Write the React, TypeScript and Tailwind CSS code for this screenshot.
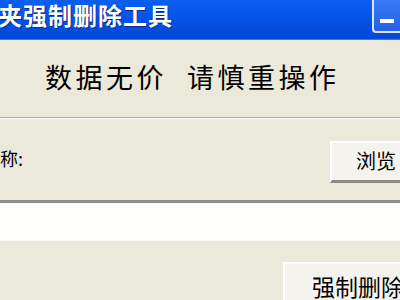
const cjk = "font-['SimSun','Noto_Sans_CJK_SC',sans-serif]";

export default function App() {
	return (
		<div
			className={`w-[400px] h-[300px] overflow-hidden bg-[#ebe9d9] flex flex-col text-black ${cjk}`}
		>
			{/* title bar */}
			<div className="h-[40px] shrink-0 flex justify-between bg-gradient-to-b from-[#0a5ef0] via-[#0552e6] to-[#0447d6] border-b border-[#3d78e8]">
				<div className="flex items-center h-[30px] ml-[-52px] text-[24px] font-bold tracking-[1px] text-white whitespace-nowrap [text-shadow:1px_1px_0_#0a2a88]">
					文件夹强制删除工具
				</div>
				<div className="w-[31px] h-[37px] mt-[-4px] mr-[-3px] rounded-[4px] border-2 border-[#dbe6fb] bg-gradient-to-b from-[#3b7bf5] to-[#2560e6] flex items-end justify-start pl-[6px] pb-[8px]">
					<div className="w-[14px] h-[4px] bg-white" />
				</div>
			</div>

			{/* heading */}
			<div className="h-[77px] shrink-0 flex items-start gap-[20px] pt-[23px] pl-[45px] text-[27px] tracking-[3.5px] whitespace-nowrap leading-none">
				<span>数据无价</span>
				<span>请慎重操作</span>
			</div>

			<div className="border-t border-[#aca899] border-b border-b-white" />

			{/* path row */}
			<div className="h-[81px] shrink-0 flex items-center justify-between">
				<span className="text-[18px] mt-[-2px]">称:</span>
				<button className="w-[80px] h-[42px] mr-[-10px] mt-[4px] bg-[#f4f3ee] border-t-2 border-l-2 border-white border-b-[3px] border-r-2 border-b-[#8d8b80] border-r-[#b8b5a6] text-left pl-[24px] text-[20px] whitespace-nowrap">
					浏览
				</button>
			</div>

			{/* sunken field */}
			<div className="h-[41px] shrink-0 bg-[#fefefb] border-t-[3px] border-[#8e8d87] border-b border-b-[#f7f6f0]" />

			{/* bottom */}
			<div className="flex-1 flex justify-end items-start pt-[21px]">
				<button className="w-[125px] h-[46px] mr-[-8px] bg-[#f4f3ee] border-t-2 border-l-2 border-white border-r-2 border-r-[#b8b5a6] text-left pl-[27px] text-[23px] whitespace-nowrap">
					强制删除
				</button>
			</div>
		</div>
	);
}
